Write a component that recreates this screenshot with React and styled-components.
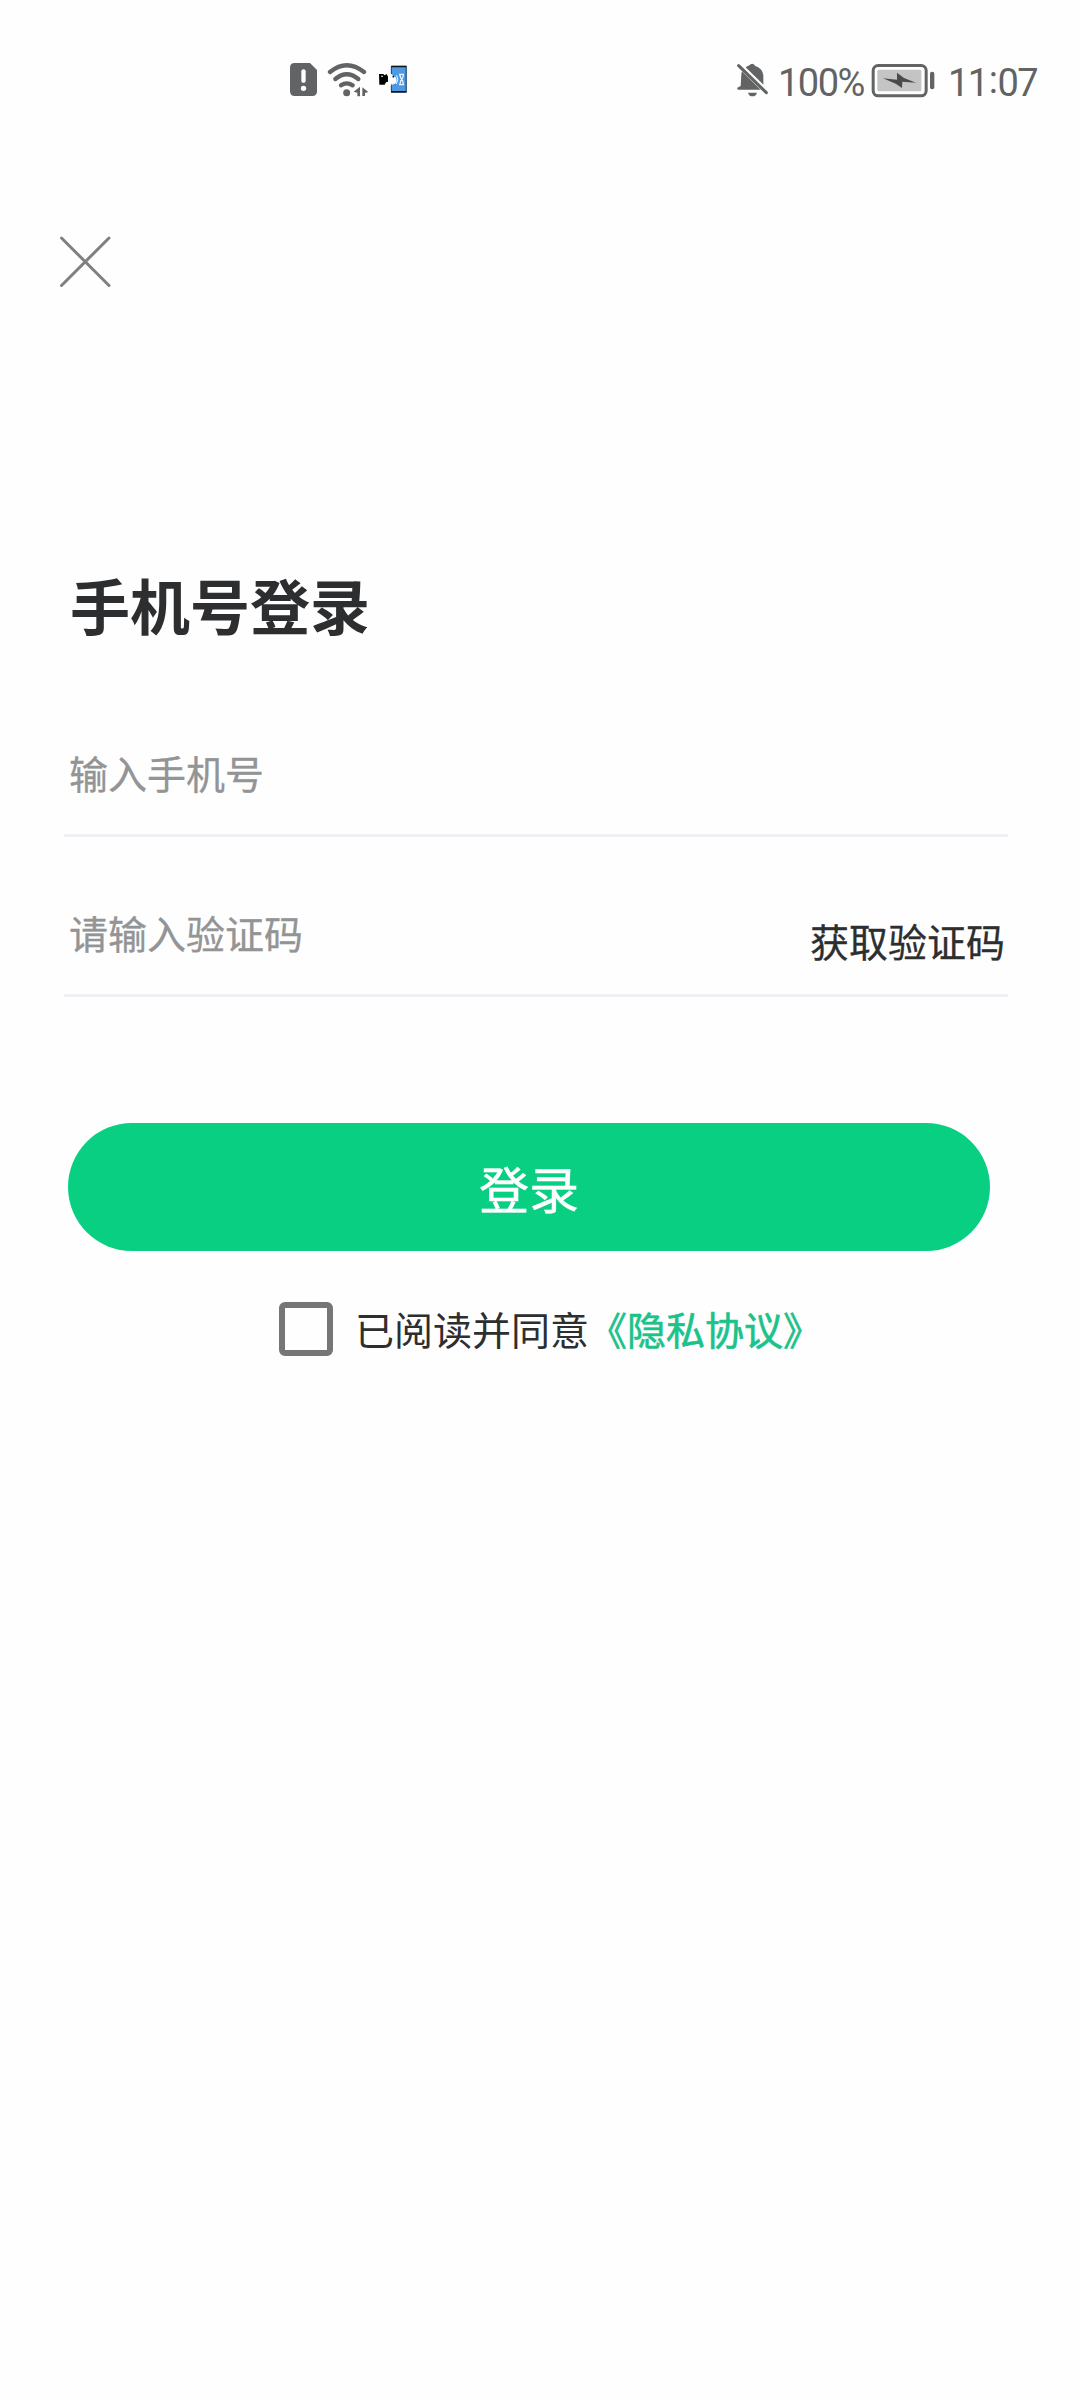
/**
 *
 * App.jsx
 *
 */

import React from 'react';
import styled, { createGlobalStyle } from 'styled-components';

function StatusBar() {
  return (
    <Status>
      <StatusIcons>
        <SimAlertIcon />
        <WifiIcon />
        <TransferIcon />
      </StatusIcons>
      <StatusInfo>
        <BellOffIcon />
        <StatusText $width={93} $indent={8}>
          100%
        </StatusText>
        <BatteryIcon />
        <StatusText $width={92} $indent={13}>
          11<Colon>:</Colon>07
        </StatusText>
      </StatusInfo>
    </Status>
  );
}

function SimAlertIcon() {
  return (
    <svg width="28" height="36" viewBox="0 0 84 108">
      <path
        d="M14 3H60L81 24V88Q81 102 67 102H14Q0 102 0 88V17Q0 3 14 3Z"
        fill="#626365"
      />
      <path d="M40.500 28V56" stroke="#fff" strokeWidth="13" strokeLinecap="round" />
      <circle cx="40.500" cy="79" r="8" fill="#fff" />
    </svg>
  );
}

function WifiIcon() {
  return (
    <svg width="42" height="36" viewBox="140 36 126 108">
      <g fill="none" stroke="#626365" strokeWidth="13" strokeLinecap="round">
        <path d="M149 66Q199 25 251 66" />
        <path d="M165 87Q199 58 234 87" />
        <path d="M182 106Q199 94 217 106" />
      </g>
      <circle cx="199" cy="128" r="10.500" fill="#626365" />
      <path d="M220 125L239 110V139H231V128ZM246 112L264 126L254 129V138H246Z" fill="#626365" />
    </svg>
  );
}

function TransferIcon() {
  return (
    <svg width="30" height="36" viewBox="292 36 90 108">
      <rect x="331" y="47" width="47" height="80" rx="4" fill="#4f98e2" />
      <path d="M331 51V47H378V52H331ZM331 123H378V128H331Z" fill="#10151c" />
      <path d="M376.500 50V126" stroke="#24415f" strokeWidth="3" />
      <path d="M332 50V72M332 106V124" stroke="#24415f" strokeWidth="3" />
      <path
        d="M295 72H308L312 76L318 72L322 80V95L316 97L312 104H296Z"
        fill="#000"
      />
      <circle cx="304" cy="79" r="2.500" fill="#fff" />
      <path d="M326 80L333 72L339 80H344L348 90L345 100L335 104L326 95Z" fill="#fff" />
      <path d="M348 76Q355 88 347 102" fill="none" stroke="#fff" strokeWidth="3" />
      <path
        d="M355 73H370M355 104H370M358 75Q358 82 363 88Q368 82 368 75M358 102Q358 94 363 88Q368 94 368 102"
        fill="none"
        stroke="#e8f7ff"
        strokeWidth="4"
      />
      <circle cx="338" cy="80" r="2.500" fill="#000" />
    </svg>
  );
}

function BellOffIcon() {
  return (
    <svg width="34" height="36" viewBox="48 36 102 108">
      <path
        d="M74 57L130 112V76Q128 56 106 48Q97 35 88 46L77 52Z"
        fill="#626365"
      />
      <path d="M64 72L66 64L122 119H56Q50 119 52 113L62 108Z" fill="#626365" />
      <path d="M62 42L146 124" stroke="#fff" strokeWidth="7" />
      <path d="M56 47L139 128" stroke="#626365" strokeWidth="9" strokeLinecap="round" />
      <path d="M84 128H111Q108 139 97 139Q87 139 84 128Z" fill="#626365" />
    </svg>
  );
}

function BatteryIcon() {
  return (
    <svg width="64" height="36" viewBox="34 36 192 108">
      <rect
        x="40.500"
        y="46.500"
        width="159"
        height="91"
        rx="15"
        fill="none"
        stroke="#626365"
        strokeWidth="9"
      />
      <rect x="53" y="59" width="132" height="65" rx="5" fill="#c4c4c5" />
      <path d="M70 85L112 89V68L133 84L169 98L128 95L127 114L108 101Z" fill="#4a4b4d" />
      <rect x="211" y="65" width="13" height="53" rx="6" fill="#626365" />
    </svg>
  );
}

function App() {
  return (
    <Page>
      <GlobalStyle />
      <StatusBar />
      <CloseButton aria-label="关闭">
        <svg width="52" height="52" viewBox="0 0 52 52">
          <path d="M2.500 2L50 49.500M50 2L2.500 49.500" stroke="#808080" strokeWidth="3" strokeLinecap="round" />
        </svg>
      </CloseButton>
      <Title>手机号登录</Title>
      <Field>
        <Placeholder>输入手机号</Placeholder>
      </Field>
      <Field>
        <Placeholder>请输入验证码</Placeholder>
        <CodeButton>获取验证码</CodeButton>
      </Field>
      <LoginButton>登录</LoginButton>
      <Agreement>
        <Checkbox />
        <AgreementText>
          已阅读并同意<PolicyLink>《隐私协议》</PolicyLink>
        </AgreementText>
      </Agreement>
    </Page>
  );
}

const GlobalStyle = createGlobalStyle`
  body {
    margin: 0;
    background: #fefefe;
  }
  * {
    box-sizing: border-box;
  }
  svg {
    display: block;
    flex: none;
  }
`;

const Page = styled.div`
  display: flex;
  flex-direction: column;
  width: 1080px;
  height: 2400px;
  overflow: hidden;
  background: #fefefe;
  font-family: 'Noto Sans CJK SC', sans-serif;
  font-size: 39px;
  color: #2d2e30;
`;

const Status = styled.div`
  display: flex;
  justify-content: space-between;
  align-items: center;
  height: 160px;
  padding-left: 290px;
`;

const StatusIcons = styled.div`
  display: flex;
  align-items: center;
  gap: 9px;
`;

const StatusInfo = styled.div`
  display: flex;
  align-items: center;
  width: 344px;
`;

const StatusText = styled.span`
  flex: none;
  width: ${(props) => props.$width}px;
  margin-left: ${(props) => props.$indent}px;
  padding-top: 5px;
  font-family: Roboto, sans-serif;
  font-size: 38px;
  line-height: 44px;
  letter-spacing: -1.5px;
  white-space: nowrap;
  color: #626365;
`;

const Colon = styled.span`
  padding: 0 1px;
  vertical-align: 3px;
  line-height: 1;
`;

const CloseButton = styled.button`
  align-self: flex-start;
  margin: 76px 0 0 59px;
  padding: 0;
  border: 0;
  background: none;
  cursor: pointer;
`;

const Title = styled.h1`
  margin: 272px 0 0 70px;
  font-size: 60px;
  font-weight: bold;
  line-height: 88px;
`;

const Field = styled.div`
  display: flex;
  justify-content: space-between;
  align-items: flex-end;
  height: 160px;
  width: 944px;
  margin-left: 64px;
  padding: 0 3px 0 5px;
  border-bottom: 3px solid #eff0f3;

  ${Title} + & {
    margin-top: 29px;
  }
`;

const Placeholder = styled.span`
  padding-bottom: 33px;
  line-height: 58px;
  color: #939495;
  -webkit-text-stroke: 0.3px #939495;
`;

const CodeButton = styled.button`
  padding: 0 0 25px;
  border: 0;
  background: none;
  font: inherit;
  line-height: 58px;
  color: inherit;
  -webkit-text-stroke: 0.3px #2d2e30;
  cursor: pointer;
`;

const LoginButton = styled.button`
  width: 922px;
  height: 128px;
  margin: 126px 0 0 68px;
  padding: 0 0 1px;
  border: 0;
  border-radius: 64px;
  background: #09cf82;
  font: inherit;
  font-size: 50px;
  line-height: 72px;
  color: #fff;
  -webkit-text-stroke: 0.5px #fff;
  cursor: pointer;
`;

const Agreement = styled.div`
  display: flex;
  align-items: center;
  gap: 22px;
  height: 58px;
  margin: 49px 0 0 279px;
`;

const Checkbox = styled.span`
  width: 54px;
  height: 54px;
  border: 6px solid #757678;
  border-radius: 6px;
`;

const AgreementText = styled.span`
  padding-bottom: 3px;
  line-height: 58px;
`;

const PolicyLink = styled.a`
  margin-left: -1px;
  color: #1bc28a;
  -webkit-text-stroke: 0.6px #1bc28a;
  cursor: pointer;
`;

export default App;
